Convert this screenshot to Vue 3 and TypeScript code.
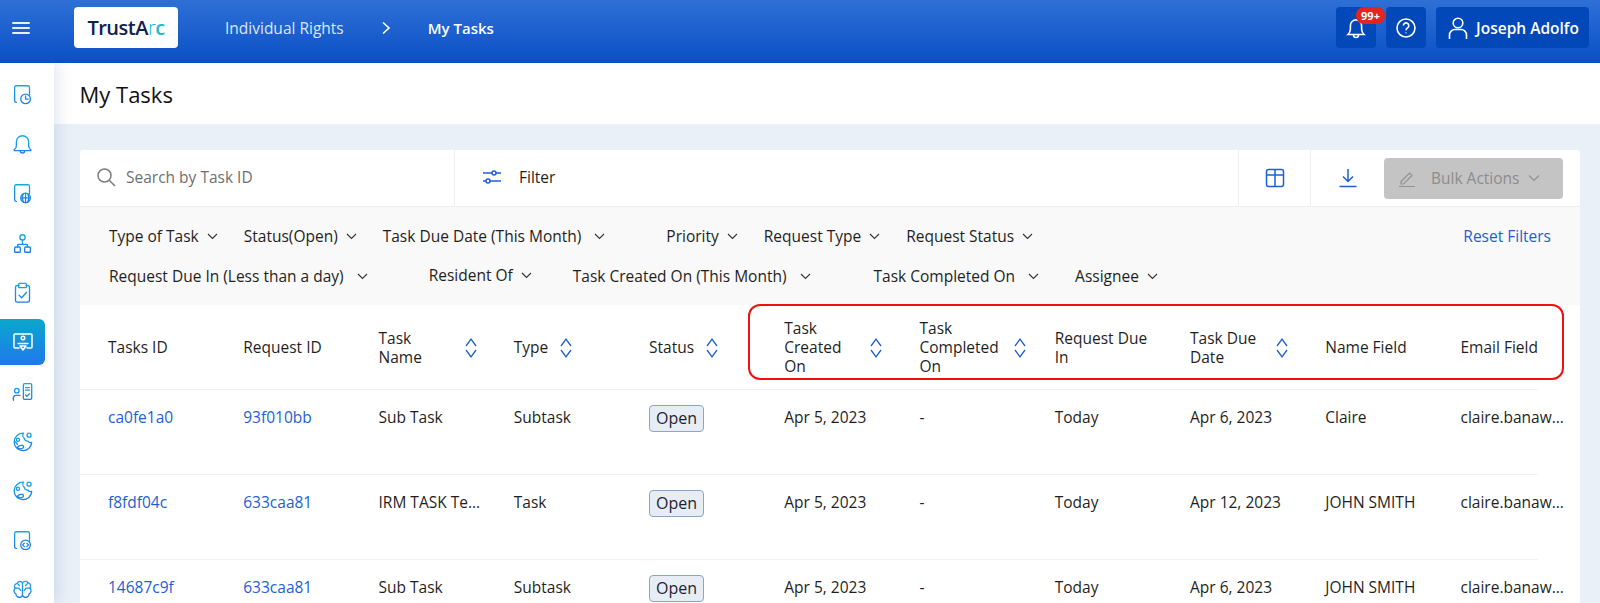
<script setup lang="ts">
interface Filter { label: string; cls: string }
interface Head { lines: string[]; sort: boolean }
interface Row { id: string; req: string; name: string; type: string; created: string; done: string; due: string; date: string; person: string; email: string }

const filterRows: Filter[][] = [
  [
    { label: 'Type of Task', cls: 'near' },
    { label: 'Status(Open)', cls: 'near' },
    { label: 'Task Due Date (This Month)', cls: 'far' },
    { label: 'Priority', cls: 'near' },
    { label: 'Request Type', cls: 'near' },
    { label: 'Request Status', cls: 'near' },
  ],
  [
    { label: 'Request Due In (Less than a day)', cls: 'far' },
    { label: 'Resident Of', cls: 'mid raised' },
    { label: 'Task Created On (This Month)', cls: 'far farther' },
    { label: 'Task Completed On', cls: 'spaced' },
    { label: 'Assignee', cls: 'near' },
  ],
]

const heads: Head[] = [
  { lines: ['Tasks ID'], sort: false },
  { lines: ['Request ID'], sort: false },
  { lines: ['Task', 'Name'], sort: true },
  { lines: ['Type'], sort: true },
  { lines: ['Status'], sort: true },
  { lines: ['Task', 'Created', 'On'], sort: true },
  { lines: ['Task', 'Completed', 'On'], sort: true },
  { lines: ['Request Due', 'In'], sort: false },
  { lines: ['Task Due', 'Date'], sort: true },
  { lines: ['Name Field'], sort: false },
  { lines: ['Email Field'], sort: false },
]

const rows: Row[] = [
  { id: 'ca0fe1a0', req: '93f010bb', name: 'Sub Task', type: 'Subtask', created: 'Apr 5, 2023', done: '-', due: 'Today', date: 'Apr 6, 2023', person: 'Claire', email: 'claire.banaw...' },
  { id: 'f8fdf04c', req: '633caa81', name: 'IRM TASK Te...', type: 'Task', created: 'Apr 5, 2023', done: '-', due: 'Today', date: 'Apr 12, 2023', person: 'JOHN SMITH', email: 'claire.banaw...' },
  { id: '14687c9f', req: '633caa81', name: 'Sub Task', type: 'Subtask', created: 'Apr 5, 2023', done: '-', due: 'Today', date: 'Apr 6, 2023', person: 'JOHN SMITH', email: 'claire.banaw...' },
]
</script>

<template>
  <div class="page">
    <svg class="defs" width="0" height="0" aria-hidden="true">
      <defs>
        <linearGradient id="sideGrad" gradientUnits="userSpaceOnUse" x1="0" y1="0" x2="0" y2="24">
          <stop offset="0" stop-color="#12aee0" />
          <stop offset="1" stop-color="#1f78ee" />
        </linearGradient>
      </defs>
    </svg>

    <header class="topbar">
      <button class="burger" aria-label="Menu"><span></span><span></span><span></span></button>
      <div class="logo"><span class="logo-dark">TrustA</span><span class="logo-arc">r</span><span class="logo-c">c</span></div>
      <nav class="crumbs">
        <span class="crumb">Individual Rights</span>
        <svg class="crumb-sep" viewBox="0 0 10 14" width="10" height="14"><path d="M2 1.5 8 7l-6 5.5" /></svg>
        <span class="crumb current">My Tasks</span>
      </nav>
      <div class="top-actions">
        <button class="top-btn square">
          <svg viewBox="0 0 24 24" width="24" height="24" class="top-icon"><path d="M4 18.5h16c-1.600-1.600-2.400-3-2.400-5.500V9.500a5.600 5.600 0 0 0-11.200 0V13c0 2.500-.8 3.900-2.400 5.500Z" /><path d="M9.500 18.500v.5a2.500 2.500 0 0 0 5 0v-.5" /></svg>
          <span class="badge">99+</span>
        </button>
        <button class="top-btn square">
          <svg viewBox="0 0 24 24" width="24" height="24" class="top-icon thin"><circle cx="12" cy="12" r="9" /><path d="M9.400 9.500a2.700 2.700 0 1 1 4.200 2.300c-1 .7-1.600 1.200-1.600 2.400" /><path d="M12 16.600v.6" /></svg>
        </button>
        <button class="top-btn user">
          <svg viewBox="0 0 24 24" width="24" height="24" class="top-icon thin"><circle cx="12" cy="7" r="4.800" /><path d="M3.500 23v-4a5.500 5.500 0 0 1 5.500-5.500h6a5.500 5.500 0 0 1 5.500 5.500v4" /></svg>
          <span>Joseph Adolfo</span>
        </button>
      </div>
    </header>

    <div class="body">
      <aside class="sidebar">
        <div class="side-item">
          <svg viewBox="0 0 24 24" class="side-icon"><path d="M5 21a2 2 0 0 1-2-2V4a2 2 0 0 1 2-2h13a2 2 0 0 1 2 2v8" /><circle cx="15.500" cy="17" r="5.500" /><path d="M15.500 14v3.200h3" /></svg>
        </div>
        <div class="side-item">
          <svg viewBox="0 0 24 24" class="side-icon"><path d="M3 19h18c.6 0 .8-.8.3-1.200-1.500-1.200-2.300-2.600-2.300-4.800V9a7 7 0 0 0-14 0v4c0 2.200-.8 3.600-2.300 4.800-.5.400-.3 1.200.3 1.200Z" /><path d="M9.500 19.200a2.500 2.500 0 0 0 5 0" /></svg>
        </div>
        <div class="side-item">
          <svg viewBox="0 0 24 24" class="side-icon"><path d="M5 21a2 2 0 0 1-2-2V4a2 2 0 0 1 2-2h13a2 2 0 0 1 2 2v8" /><circle cx="15.500" cy="17" r="5.500" /><path d="M10 17h11M15.500 11.500v11M13.200 12c-1.500 3-1.500 7 0 10M17.800 12c1.500 3 1.500 7 0 10" /></svg>
        </div>
        <div class="side-item">
          <svg viewBox="0 0 24 24" class="side-icon"><circle cx="12" cy="5" r="3" /><path d="M12 8v5M6.500 16v-3h11v3" /><rect x="3" y="16" width="6.500" height="6" rx="1" /><rect x="14.500" y="16" width="6.500" height="6" rx="1" /></svg>
        </div>
        <div class="side-item">
          <svg viewBox="0 0 24 24" class="side-icon"><path d="M8 4H6a2 2 0 0 0-2 2v15a2 2 0 0 0 2 2h12a2 2 0 0 0 2-2V6a2 2 0 0 0-2-2h-2" /><rect x="7.500" y="1.500" width="9" height="5" rx="1" /><path d="m8 15 3 3 5.500-6" /></svg>
        </div>
        <div class="side-item active">
          <svg viewBox="0 0 24 24" class="side-icon white"><path d="M8 18H4a1 1 0 0 1-1-1V5a1 1 0 0 1 1-1h16a1 1 0 0 1 1 1v12a1 1 0 0 1-1 1h-4" /><circle cx="12" cy="8" r="1.800" /><path d="M7 13.500h10M9 16h6l-3 4Z" /></svg>
        </div>
        <div class="side-item">
          <svg viewBox="0 0 24 24" class="side-icon"><circle cx="5.500" cy="11" r="2.600" /><path d="M1.500 22v-2.500a3 3 0 0 1 3-3H9" /><rect x="13" y="3" width="9.500" height="18" rx="1.500" /><path d="M15.500 7.500h4.500M15.500 10.500h4.500M15.500 16l1.500 1.500 3-3" /></svg>
        </div>
        <div class="side-item">
          <svg viewBox="0 0 24 24" class="side-icon"><path d="M13 2.500A10 10 0 1 0 22.500 13c-1.600.6-3.500 0-4.200-1.500-2 .5-4-1-4-3-1.700-.8-2.400-3.500-1.300-6Z" /><circle cx="19.500" cy="4.800" r="2.300" /><circle cx="6.800" cy="10" r="1.800" /><path d="M6 19c1-2 4-3 6-2.500 1.400.4 1.400 2 .5 3-1.300 1.300-3.500 1.300-6.500-.5ZM3 12.500c2 .5 3 2 3 3" /></svg>
        </div>
        <div class="side-item">
          <svg viewBox="0 0 24 24" class="side-icon"><path d="M13 2.500A10 10 0 1 0 22.500 13c-1.600.6-3.500 0-4.200-1.500-2 .5-4-1-4-3-1.700-.8-2.400-3.500-1.300-6Z" /><circle cx="19.500" cy="4.800" r="2.300" /><circle cx="6.800" cy="10" r="1.800" /><path d="M6 19c1-2 4-3 6-2.500 1.400.4 1.400 2 .5 3-1.300 1.300-3.500 1.300-6.500-.5Z" /></svg>
        </div>
        <div class="side-item">
          <svg viewBox="0 0 24 24" class="side-icon"><path d="M5 21a2 2 0 0 1-2-2V4a2 2 0 0 1 2-2h13a2 2 0 0 1 2 2v8" /><circle cx="15.500" cy="17" r="5.500" /><path d="m14 15.200-1.800 1.800 1.800 1.800M17 15.200l1.800 1.800-1.800 1.800" /></svg>
        </div>
        <div class="side-item">
          <svg viewBox="0 0 24 24" class="side-icon"><path d="M12 4.500C11 2.500 7 2 6 5 3 5.500 2 8.500 3.500 10.500 1.500 12.500 2 16 4.500 17c0 3 3.500 5 6 3.500.8-.4 1.500-1.200 1.500-2.500Zm0 0c1-2 5-2.500 6-.5 3 .5 4 4.500 2.500 6.500 2 2 1.500 5.500-1 6.500 0 3-3.500 5-6 3.500-.8-.4-1.500-1.200-1.500-2.500Z" /><path d="M3.500 10.500h4.500l2 2.500M20.500 10.500H16l-2 2.500M6 5l2.500 2.500M18 5l-2.500 2.500" /></svg>
        </div>
      </aside>

      <main class="content">
        <div class="title-bar"><h1>My Tasks</h1></div>
        <section class="card">
          <div class="toolbar">
            <div class="search">
              <svg viewBox="0 0 20 20" width="20" height="20" class="search-icon"><circle cx="8.500" cy="8.500" r="6.500" /><path d="m13.500 13.500 5.500 5.500" /></svg>
              <span>Search by Task ID</span>
            </div>
            <div class="filter-toggle">
              <svg viewBox="0 0 20 16" width="20" height="16" class="blue-icon"><path d="M1 4h9M14 4h5M1 12h3M8 12h11" /><circle cx="12" cy="4" r="2" /><circle cx="6" cy="12" r="2" /></svg>
              <span>Filter</span>
            </div>
            <button class="tool-btn">
              <svg viewBox="0 0 20 20" width="20" height="20" class="blue-icon"><rect x="1.500" y="1.500" width="17" height="17" rx="2" /><path d="M1.500 7h17M10 1.500v17" /></svg>
            </button>
            <button class="tool-btn last">
              <svg viewBox="0 0 20 20" width="20" height="20" class="blue-icon"><path d="M10 1v12M5 8.500l5 5 5-5M1.500 18.500h17" /></svg>
            </button>
            <button class="bulk">
              <svg viewBox="0 0 18 18" width="18" height="18" class="bulk-icon"><path d="M3 12.500 11.500 4l2.500 2.500L5.500 15H3ZM1 17.500h16" /></svg>
              <span class="bulk-label">Bulk Actions</span>
              <svg viewBox="0 0 12 8" width="12" height="8" class="bulk-icon"><path d="m1 1.500 5 5 5-5" /></svg>
            </button>
          </div>

          <div class="filters">
            <div v-for="(fr, i) in filterRows" :key="i" class="filter-row">
              <div v-for="f in fr" :key="f.label" class="filter" :class="f.cls">
                <span>{{ f.label }}</span>
                <svg viewBox="0 0 11 7" width="11" height="7" class="chev"><path d="m1 1 4.500 4.500L10 1" /></svg>
              </div>
              <a v-if="i === 0" class="reset">Reset Filters</a>
            </div>
          </div>

          <div class="table">
            <div class="tr head">
              <div v-for="h in heads" :key="h.lines.join()" class="th">
                <div class="th-text" :class="{ sized: h.sort && h.lines.length > 1, broad: h.lines[1] === 'Completed' }">
                  <span v-for="l in h.lines" :key="l" class="line">{{ l }}</span>
                </div>
                <svg v-if="h.sort" viewBox="0 0 12 24" width="12" height="24" class="sort"><path d="m1 10 5-7 5 7M1 14l5 7 5-7" /></svg>
              </div>
              <div class="highlight"></div>
            </div>
            <div v-for="r in rows" :key="r.id" class="tr">
              <div class="td"><a class="link">{{ r.id }}</a></div>
              <div class="td"><a class="link">{{ r.req }}</a></div>
              <div class="td">{{ r.name }}</div>
              <div class="td">{{ r.type }}</div>
              <div class="td"><span class="pill">Open</span></div>
              <div class="td">{{ r.created }}</div>
              <div class="td">{{ r.done }}</div>
              <div class="td">{{ r.due }}</div>
              <div class="td">{{ r.date }}</div>
              <div class="td">{{ r.person }}</div>
              <div class="td">{{ r.email }}</div>
            </div>
          </div>
        </section>
      </main>
    </div>
  </div>
</template>

<style>
html, body { margin: 0; overflow: hidden; background: #e9f0f8; }
</style>

<style scoped>
.page { width: 1600px; height: 603px; overflow: hidden; font-family: "Open Sans", Lato, sans-serif; font-size: 15.500px; color: #1f1f1f; display: flex; flex-direction: column; }
.defs { position: absolute; }
button { font: inherit; border: 0; padding: 0; background: none; color: inherit; }

.topbar { height: 63px; flex: none; display: flex; align-items: center; padding-bottom: 8px; box-sizing: border-box; background: linear-gradient(180deg, #2f70d6 0%, #0a4fc6 100%); color: #fff; position: relative; z-index: 2; }
.burger { width: 18px; margin-left: 12px; display: flex; flex-direction: column; gap: 3px; }
.burger span { display: block; height: 2px; background: #e8f0ff; border-radius: 1px; }
.logo { margin-left: 44px; width: 104px; height: 41px; background: #fff; border-radius: 4px; display: flex; align-items: center; justify-content: center; font-size: 20px; font-weight: 600; letter-spacing: -0.5px; }
.logo-dark { color: #10224f; }
.logo-arc { color: #20b7cf; font-weight: 300; }
.logo-c { color: #1fb8d0; }
.crumbs { margin-left: 47px; display: flex; align-items: center; }
.crumb { color: #dbe7fb; }
.crumb.current { color: #fff; font-weight: 600; font-size: 15px; }
.crumb-sep { margin: 0 37px; fill: none; stroke: #fff; stroke-width: 1.600; }
.top-actions { margin-left: auto; margin-right: 11px; display: flex; gap: 10px; }
.top-btn { height: 41px; background: #0348b9; border-radius: 4px; display: flex; align-items: center; justify-content: center; position: relative; color: #fff; }
.top-btn.square { width: 40px; }
.top-btn.user { width: 153px; gap: 6px; font-weight: 600; }
.top-icon { fill: none; stroke: #fff; stroke-width: 1.600; }
.badge { position: absolute; top: 0; left: 20px; width: 29px; height: 17px; line-height: 17px; background: #e1251f; color: #fff; border-radius: 8px; font-size: 11px; font-weight: 700; text-align: center; }

.body { flex: 1; display: flex; min-height: 0; }
.sidebar { width: 54px; flex: none; background: #fff; padding-top: 7px; box-sizing: border-box; box-shadow: 4px 0 14px rgba(120, 140, 180, 0.22); position: relative; z-index: 1; }
.side-item { height: 49.500px; width: 45px; display: flex; align-items: center; justify-content: center; box-sizing: border-box; }
.side-item.active { height: 46px; margin: 1.750px 0; background: linear-gradient(180deg, #0aa8cd 0%, #1f78ec 100%); border-radius: 0 6px 6px 0; }
.side-icon { width: 21px; height: 21px; fill: none; stroke: url(#sideGrad); stroke-width: 1.500; stroke-linecap: round; stroke-linejoin: round; }
.side-icon.white { stroke: #fff; width: 24px; height: 24px; }

.content { flex: 1; min-width: 0; }
.title-bar { height: 61px; background: #fff; display: flex; align-items: center; padding-left: 25.500px; }
h1 { margin: 0; font-size: 22px; font-weight: 500; color: #111; }
.card { margin: 26px 20px 0 26px; background: #fff; border-radius: 3px 3px 0 0; }

.toolbar { height: 57px; display: flex; align-items: stretch; border-bottom: 1px solid #eceef1; box-sizing: border-box; }
.search { width: 375px; border-right: 1px solid #eceef1; display: flex; align-items: center; gap: 10px; padding: 0 0 2px 16px; box-sizing: border-box; color: #6f6f6f; }
.search-icon { fill: none; stroke: #7d7d7d; stroke-width: 1.500; }
.filter-toggle { width: 783px; display: flex; align-items: center; gap: 17px; padding: 0 0 2px 27px; box-sizing: border-box; }
.blue-icon { fill: none; stroke: #1f5fd6; stroke-width: 1.500; }
.tool-btn { width: 72px; border-left: 1px solid #eceef1; display: flex; align-items: center; justify-content: center; }
.tool-btn.last { width: 74px; }
.bulk { width: 179px; height: 41px; align-self: center; background: #c4c4c4; border-radius: 4px; display: flex; align-items: center; padding-left: 14px; box-sizing: border-box; color: #8c8c8c; font-size: 15.500px; }
.bulk-label { margin: 0 9px 0 15px; }
.bulk-icon { fill: none; stroke: #939393; stroke-width: 1.200; }

.filters { height: 98px; background: #f9f9f9; padding: 19px 29px 0; box-sizing: border-box; display: flex; flex-direction: column; gap: 20px; }
.filter-row { height: 20px; display: flex; align-items: center; }
.filter { display: flex; align-items: center; gap: 8px; white-space: nowrap; line-height: 20px; }
.filter.near { margin-right: 26px; }
.filter.mid { margin-right: 41px; }
.filter.spaced { margin-right: 36px; gap: 13px; }
.filter.far { margin-right: 61px; gap: 13px; }
.filter.farther { margin-right: 63px; }
.filter.raised { transform: translateY(-1px); }
.chev { fill: none; stroke: #333; stroke-width: 1.100; }
.reset { margin-left: auto; color: #1e5ed6; font-weight: 500; }

.table { position: relative; width: 1458px; }
.tr { display: grid; grid-template-columns: repeat(10, 135.250px) 105.500px; border-bottom: 1px solid #eef0f2; height: 85px; box-sizing: border-box; position: relative; }
.tr.head { align-items: center; padding-top: 1px; }
.th { padding-left: 28px; display: flex; align-items: center; gap: 12px; white-space: nowrap; line-height: 19px; }
.th-text.sized { min-width: 74px; }
.th-text.broad { min-width: 82px; }
.line { display: block; }
.sort { flex: none; fill: none; stroke: #1f5fd6; stroke-width: 1.300; }
.td { padding: 17px 0 0 28px; white-space: nowrap; line-height: 20px; }
.link { color: #1e5ed6; }
.pill { display: inline-block; margin-top: -2px; height: 27px; width: 55px; box-sizing: border-box; line-height: 25px; text-align: center; background: #e6edf5; border: 1px solid #8aa6c6; border-radius: 4px; font-size: 16px; color: #1d2430; }
.highlight { position: absolute; left: 668px; top: -1px; width: 816px; height: 76px; box-sizing: border-box; border: 2px solid #f01010; border-radius: 12px; pointer-events: none; }
</style>
